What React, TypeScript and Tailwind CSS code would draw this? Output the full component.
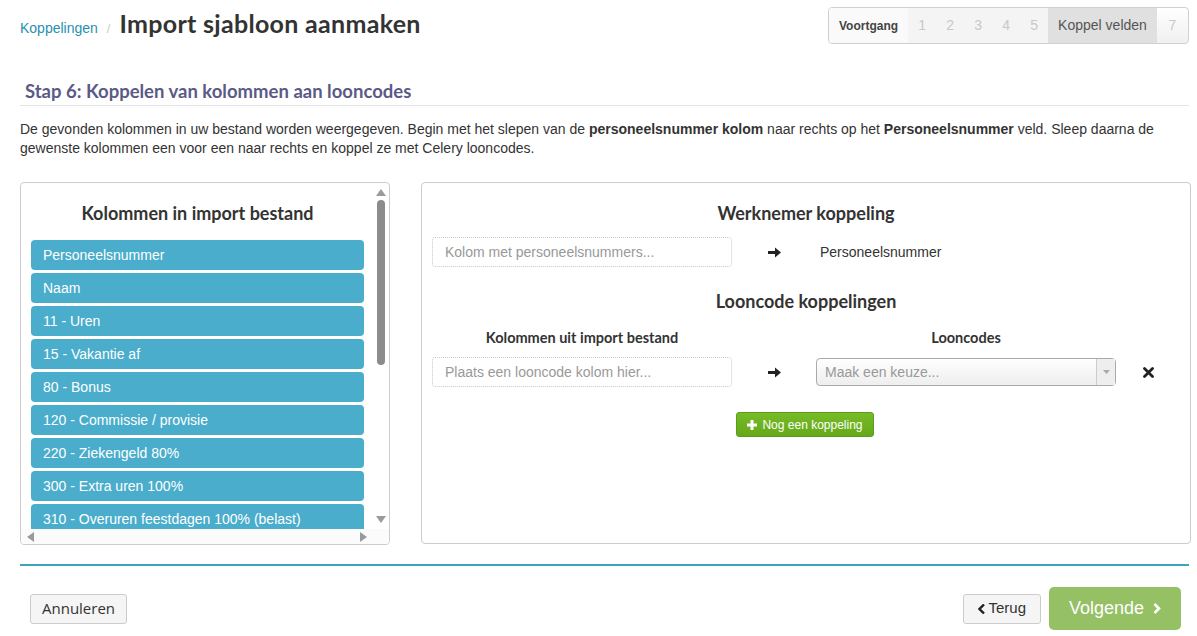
import React from "react";

const items = [
  "Personeelsnummer",
  "Naam",
  "11 - Uren",
  "15 - Vakantie af",
  "80 - Bonus",
  "120 - Commissie / provisie",
  "220 - Ziekengeld 80%",
  "300 - Extra uren 100%",
  "310 - Overuren feestdagen 100% (belast)",
  "320 - Overuren 125%",
];

const head = { fontFamily: "Lato, 'Open Sans', sans-serif" };
const arial = { fontFamily: "'Liberation Sans', Arial, sans-serif" };

function Arrow() {
  return (
    <svg width="13" height="11" viewBox="0 0 13 11">
      <path d="M0 4h7V0.5l6 5-6 5V7H0z" fill="#222" />
    </svg>
  );
}

export default function App() {
  return (
    <div className="w-[1197px] h-[636px] bg-white overflow-hidden text-[14px] text-[#333]" style={arial}>
      <div className="pl-5 pr-[8px]">
        {/* Header */}
        <div className="flex items-start justify-between pt-[7px]">
          <div className="flex items-baseline mt-[-2px]">
            <span className="text-[14px] text-[#2a8fae]">Koppelingen</span>
            <span className="text-[#ccc] mx-[9px] text-[13px]">/</span>
            <span className="text-[25px] font-bold text-[#333] tracking-[0.3px]" style={head}>Import sjabloon aanmaken</span>
          </div>
          <div className="flex h-[37px] border border-[#d0d0d0] rounded-[4px] overflow-hidden bg-gradient-to-b from-white to-[#f0f0f0] text-[14px] w-[361px]">
            <div className="flex items-center px-[10px] font-bold text-[12px] text-[#444] bg-[#fafafa]">Voortgang</div>
            <div className="flex items-center text-[#c8c8c8] bg-[#f4f4f4]">
              <span className="w-[28px] text-center">1</span>
              <span className="w-[28px] text-center">2</span>
              <span className="w-[28px] text-center">3</span>
              <span className="w-[28px] text-center">4</span>
              <span className="w-[28px] text-center">5</span>
            </div>
            <div className="flex items-center px-[10px] text-[#555] bg-[#e0e0e0]">Koppel velden</div>
            <div className="flex items-center justify-center flex-1 text-[#c8c8c8]">7</div>
          </div>
        </div>

        {/* Step heading */}
        <div className="mt-[35px] border-b border-[#e4e4e4] pb-[2px] pl-[5px]">
          <h2 className="text-[18.5px] font-bold text-[#5b5a86] leading-[24px]" style={head}>Stap 6: Koppelen van kolommen aan looncodes</h2>
        </div>
        <p className="mt-[14px] leading-[19px] text-[#333]">
          De gevonden kolommen in uw bestand worden weergegeven. Begin met het slepen van de <b>personeelsnummer kolom</b> naar rechts op het <b>Personeelsnummer</b> veld. Sleep daarna de gewenste kolommen een voor een naar rechts en koppel ze met Celery looncodes.
        </p>

        {/* Panels */}
        <div className="flex gap-[31px] mt-[24px]">
          <div className="w-[370px] shrink-0 h-[363px] border border-[#ccc] rounded-[4px] flex flex-col overflow-hidden">
            <div className="flex flex-1 min-h-0">
              <div className="flex-1 overflow-hidden pl-[10px] pr-[9px]">
                <h3 className="text-center text-[18px] font-bold text-[#333] mt-[17px] mb-[14px] leading-[26px]" style={head}>Kolommen in import bestand</h3>
                <div className="flex flex-col gap-[3px]">
                  {items.map((t) => (
                    <div key={t} className="h-[30px] rounded-[4px] bg-[#4aadcc] text-white text-[14px] flex items-center pl-[12px] whitespace-nowrap">
                      {t}
                    </div>
                  ))}
                </div>
              </div>
              <div className="w-[16px] flex flex-col items-center pt-[6px] pb-[6px]">
                <svg width="10" height="7" viewBox="0 0 10 7"><path d="M5 0l5 7H0z" fill="#9a9a9a" /></svg>
                <div className="w-[8px] h-[165px] rounded-[4px] bg-[#8c8c8c] mt-[4px]" />
                <div className="flex-1" />
                <svg width="10" height="7" viewBox="0 0 10 7"><path d="M0 0h10L5 7z" fill="#9a9a9a" /></svg>
              </div>
            </div>
            <div className="h-[15px] flex items-center justify-between pl-[6px] pr-[22px] bg-[#fbfbfb]">
              <svg width="7" height="10" viewBox="0 0 7 10"><path d="M7 0v10L0 5z" fill="#9a9a9a" /></svg>
              <svg width="7" height="10" viewBox="0 0 7 10"><path d="M0 0v10l7-5z" fill="#9a9a9a" /></svg>
            </div>
          </div>

          <div className="flex-1 h-[362px] border border-[#ccc] rounded-[4px] px-[10px]">
            <h3 className="text-center text-[18px] font-bold text-[#333] mt-[17px] leading-[26px]" style={head}>Werknemer koppeling</h3>
            <div className="flex items-center mt-[11px]">
              <div className="w-[300px] h-[30px] border border-dotted border-[#c8c8c8] rounded-[3px] flex items-center pl-[12px] text-[#999]">Kolom met personeelsnummers...</div>
              <div className="w-[84px] flex justify-center"><Arrow /></div>
              <div className="ml-[4px] text-[#333]">Personeelsnummer</div>
            </div>
            <h3 className="text-center text-[18px] font-bold text-[#333] mt-[21px] leading-[26px]" style={head}>Looncode koppelingen</h3>
            <div className="flex mt-[14px]">
              <div className="w-[300px] text-center text-[14.5px] font-bold text-[#333] leading-[20px]" style={head}>Kolommen uit import bestand</div>
              <div className="w-[84px]" />
              <div className="w-[300px] text-center text-[14.5px] font-bold text-[#333] leading-[20px]" style={head}>Looncodes</div>
            </div>
            <div className="flex items-center mt-[9px]">
              <div className="w-[300px] h-[30px] border border-dotted border-[#c8c8c8] rounded-[3px] flex items-center pl-[12px] text-[#999]">Plaats een looncode kolom hier...</div>
              <div className="w-[84px] flex justify-center"><Arrow /></div>
              <div className="w-[300px] h-[28px] border border-[#aaa] rounded-[4px] bg-gradient-to-b from-white to-[#eee] flex items-center">
                <span className="flex-1 pl-[8px] text-[#999]">Maak een keuze...</span>
                <div className="w-[19px] h-full border-l border-[#ccc] bg-[#eee] flex items-center justify-center">
                  <svg width="7" height="4" viewBox="0 0 7 4"><path d="M0 0h7L3.5 4z" fill="#aaa" /></svg>
                </div>
              </div>
              <div className="w-[64px] flex justify-center">
                <svg width="11" height="11" viewBox="0 0 11 11"><path d="M1.5 1.5l8 8M9.5 1.5l-8 8" stroke="#222" strokeWidth="2.8" strokeLinecap="round" /></svg>
              </div>
            </div>
            <div className="flex justify-center mt-[25px] pr-[2px]">
              <div className="h-[25px] px-[10px] rounded-[3px] bg-gradient-to-b from-[#77bb26] to-[#65a81a] border border-[#5c9c18] text-white text-[12px] flex items-center gap-[5px]">
                <svg width="10" height="10" viewBox="0 0 10 10"><path d="M3.5 0h3v3.5H10v3H6.5V10h-3V6.5H0v-3h3.5z" fill="#fff" /></svg>
                Nog een koppeling
              </div>
            </div>
          </div>
        </div>

        <div className="mt-[19px] h-[2px] bg-[#3ba5b9]" />

        <div className="flex items-center justify-between mt-[21px] pl-[10px] pr-[8px]">
          <button className="h-[30px] px-[11px] border border-[#ccc] rounded-[3px] bg-[#f5f5f5] text-[15px] text-[#333]" style={{ fontFamily: "'Open Sans', sans-serif" }}>Annuleren</button>
          <div className="flex items-center gap-[8px]">
            <button className="h-[30px] px-[14px] border border-[#ccc] rounded-[3px] bg-[#f5f5f5] text-[15px] text-[#333] flex items-center gap-[2px]">
              <svg width="8" height="10" viewBox="0 0 8 10"><path d="M6 0.5L1.5 5 6 9.5" stroke="#222" strokeWidth="2.4" fill="none" /></svg>
              Terug
            </button>
            <button className="h-[43px] w-[132px] rounded-[5px] bg-[#95c064] text-white text-[18px] flex items-center justify-center gap-[9px]">
              Volgende
              <svg width="8" height="11" viewBox="0 0 8 11"><path d="M1.5 1l4.5 4.5-4.5 4.5" stroke="#fff" strokeWidth="2.6" fill="none" /></svg>
            </button>
          </div>
        </div>
      </div>
    </div>
  );
}
